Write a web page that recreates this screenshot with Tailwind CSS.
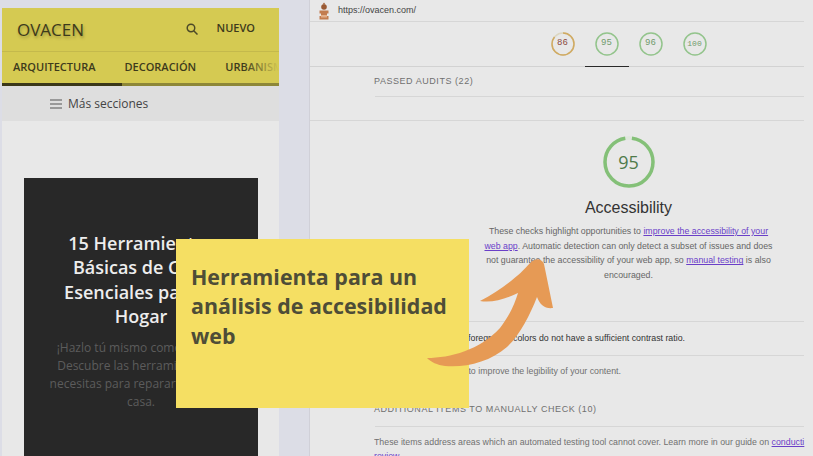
<!DOCTYPE html>
<html lang="es">
<head>
<meta charset="utf-8">
<script src="https://cdn.jsdelivr.net/npm/@tailwindcss/browser@4"></script>
<title>OVACEN</title>
</head>
<body class="w-[813px] h-[456px] overflow-hidden bg-[#dcdde6]">
<div class="relative flex h-[456px] w-[813px] overflow-hidden">
  <!-- Mobile preview -->
  <section class="ml-[2px] mt-[8px] flex h-[448px] w-[277px] shrink-0 flex-col overflow-hidden bg-[#e8e8e8] font-['Open_Sans',sans-serif]">
    <header class="h-[78px] shrink-0 bg-[#d5ca52] text-[#3d3a1c]">
      <div class="flex h-[44px] items-center border-b border-[#c4b94c] pl-[15px] pr-[24px]">
        <span class="text-[17px] leading-[24px] [text-shadow:1px_2px_3px_rgba(60,55,20,0.35)]">OVACEN</span>
        <svg class="relative top-[-1px] ml-auto" width="12" height="12" viewBox="0 0 14 14" fill="none" stroke="#4d4a28" stroke-width="1.7"><circle cx="5.8" cy="5.8" r="4.4"/><path d="M9 9l4.4 4.4"/></svg>
        <span class="relative top-[-1px] ml-[19px] text-[11px] font-semibold">NUEVO</span>
      </div>
      <div class="relative flex h-[34px] overflow-hidden">
        <div class="flex h-[31px] items-center whitespace-nowrap pl-[11px] text-[11px] font-semibold">
          <span>ARQUITECTURA</span>
          <span class="ml-[29px]">DECORACIÓN</span>
          <span class="ml-[29px]">URBANISMO</span>
        </div>
        <div class="absolute right-0 top-0 h-[31px] w-[36px] bg-gradient-to-r from-[#d5ca52]/0 to-[#d5ca52]"></div>
        <div class="absolute bottom-0 left-0 h-[3px] w-full bg-[#8d8738]"></div>
        <div class="absolute bottom-0 left-0 h-[3px] w-[120px] bg-[#3b3819]"></div>
      </div>
    </header>
    <div class="flex h-[35px] shrink-0 items-center bg-[#dedede] pl-[48px] text-[12px] text-[#444]">
      <svg width="12" height="10" viewBox="0 0 12 10" fill="none" stroke="#555" stroke-width="1.2"><path d="M0 1h12M0 5h12M0 9h12"/></svg>
      <span class="ml-[6px]">Más secciones</span>
    </div>
    <article class="ml-[22px] mt-[57px] flex h-[300px] w-[234px] flex-col items-center bg-[#282828] pt-[53px] text-center">
      <h1 class="whitespace-nowrap text-[18px] font-semibold leading-[24.4px] text-[#ededed]">15 Herramientas<br>Básicas de Casa<br>Esenciales para el<br>Hogar</h1>
      <p class="mt-[10px] whitespace-nowrap text-[12px] leading-[18px] text-[#5c5c5c]">¡Hazlo tú mismo como un pro!<br>Descubre las herramientas de<br>necesitas para reparar y mejorar<br>casa.</p>
    </article>
  </section>

  <!-- Audit report -->
  <main class="ml-[30px] h-[456px] w-[640px] shrink-0 overflow-hidden border-l border-[#d0d0d8] bg-[#e8e8e8] font-['Liberation_Sans',sans-serif] text-[#666]">
    <div class="flex h-[21px] items-center pl-[8px]">
      <svg width="12" height="18" viewBox="0 0 12 18"><path d="M6 0.5l1.5 2h-3z" fill="#a8653a"/><circle cx="6" cy="5" r="2.8" fill="#9a5a34"/><path d="M1.5 8.5h9v3H9v2.5h1.5v3.5h-9V14H3v-2.5H1.5z" fill="#c27c50"/><rect x="3" y="13" width="6" height="2.5" fill="#e2ad88"/></svg>
      <span class="ml-[8px] text-[9px] text-[#444]">https://ovacen.com/</span>
    </div>
    <div class="h-px w-[494px] bg-[#d6d6d6]"></div>
    <div class="relative flex h-[44px] items-center justify-center gap-[20px] pr-[2px] font-['Liberation_Mono',monospace] text-[9px]">
      <div class="relative flex h-[24px] w-[24px] items-center justify-center text-[#8a4a3c]">
        <svg class="absolute inset-0" width="24" height="24" viewBox="0 0 24 24" fill="none"><circle cx="12" cy="12" r="11" stroke="#dcd6c0" stroke-width="1.5"/><circle cx="12" cy="12" r="11" stroke="#d0aa62" stroke-width="1.5" stroke-dasharray="59 69" transform="rotate(-90 12 12)"/></svg>86
      </div>
      <div class="relative flex h-[24px] w-[24px] items-center justify-center text-[#6f9a6c]">
        <svg class="absolute inset-0" width="24" height="24" viewBox="0 0 24 24" fill="none"><circle cx="12" cy="12" r="11" stroke="#93c48c" stroke-width="1.5"/></svg>95
      </div>
      <div class="relative flex h-[24px] w-[24px] items-center justify-center text-[#6f9a6c]">
        <svg class="absolute inset-0" width="24" height="24" viewBox="0 0 24 24" fill="none"><circle cx="12" cy="12" r="11" stroke="#93c48c" stroke-width="1.5"/></svg>96
      </div>
      <div class="relative flex h-[24px] w-[24px] items-center justify-center text-[#6f9a6c]">
        <svg class="absolute inset-0" width="24" height="24" viewBox="0 0 24 24" fill="none"><circle cx="12" cy="12" r="11" stroke="#93c48c" stroke-width="1.5"/></svg><span class="text-[8px]">100</span>
      </div>
      <div class="absolute bottom-[-1px] left-[275px] h-[1px] w-[44px] bg-[#2a2a2a]"></div>
    </div>
    <div class="h-px w-[494px] bg-[#d2d2d2]"></div>
    <div class="ml-[65px] flex h-[29px] w-[429px] items-center text-[9px] tracking-[0.55px] text-[#707070]"><span class="ml-[-1px]">PASSED AUDITS (22)</span></div>
    <div class="ml-[65px] h-px w-[429px] bg-[#d6d6d6]"></div>
    <div class="mt-[23px] h-px w-[494px] bg-[#d6d6d6]"></div>
    <div class="flex flex-col items-center pr-[2px] pt-[15px]">
      <div class="relative flex h-[52px] w-[52px] items-center justify-center font-['Open_Sans',sans-serif] text-[18px] text-[#4f7a4a]">
        <svg class="absolute inset-0" width="52" height="52" viewBox="0 0 52 52" fill="none"><circle cx="26" cy="26" r="24" stroke="#dfe7dc" stroke-width="3.5"/><circle cx="26" cy="26" r="24" stroke="#84c078" stroke-width="3.5" stroke-dasharray="143 151" stroke-dashoffset="-3" transform="rotate(-90 26 26)"/></svg>95
      </div>
      <h2 class="mt-[10px] text-[16px] leading-[20px] text-[#333]">Accessibility</h2>
      <p class="mt-[6px] whitespace-nowrap text-center text-[8.8px] leading-[14.7px] text-[#666]">These checks highlight opportunities to <a class="text-[#6a3fc8] underline">improve the accessibility of your</a><br><a class="text-[#6a3fc8] underline">web app</a>. Automatic detection can only detect a subset of issues and does<br>not guarantee the accessibility of your web app, so <a class="text-[#6a3fc8] underline">manual testing</a> is also<br>encouraged.</p>
    </div>
    <div class="ml-[65px] mt-[38px] flex h-[35px] w-[429px] items-center justify-end whitespace-nowrap border-y border-[#d6d6d6] pr-[119px] text-[8.8px] text-[#333]">Background and foreground colors do not have a sufficient contrast ratio.</div>
    <div class="ml-[65px] flex h-[32px] w-[429px] items-center justify-end whitespace-nowrap pr-[183px] text-[8.8px] text-[#707070]">These are opportunities to improve the legibility of your content.</div>
    <div class="ml-[65px] mt-[6px] flex h-[33px] w-[429px] items-center whitespace-nowrap border-b border-[#d6d6d6] text-[9px] tracking-[0.55px] text-[#707070]"><span class="ml-[-1px]">ADDITIONAL ITEMS TO MANUALLY CHECK (10)</span></div>
    <p class="ml-[64px] mt-[8px] w-[432px] overflow-hidden whitespace-nowrap text-[8.8px] leading-[14px] text-[#707070]">These items address areas which an automated testing tool cannot cover. Learn more in our guide on <a class="text-[#6a3fc8] underline">conducti</a><br><a class="text-[#6a3fc8] underline">review</a>.</p>
  </main>

  <!-- Overlay callout -->
  <div class="absolute left-[176px] top-[239px] h-[169px] w-[293px] bg-[#f5df63] pl-[15px] pt-[23px] font-['Open_Sans',sans-serif] text-[21.4px] font-bold leading-[29.3px] text-[#4e4d37]">Herramienta para un<br>análisis de accesibilidad<br>web</div>
  <svg class="absolute left-0 top-0" width="813" height="456" viewBox="0 0 813 456"><path d="M427 358C450 358 480 350 500 328C510 315 515 303 518 293C505 299 492 303 480 301C500 291 520 275 530 263C536 258 541 258 544 264L553 308C545 309 540 305 537 297C530 315 520 335 507 347C490 362 465 368 445 366C437 365 431 362 427 358Z" fill="#e69a55"/></svg>
</div>
</body>
</html>
